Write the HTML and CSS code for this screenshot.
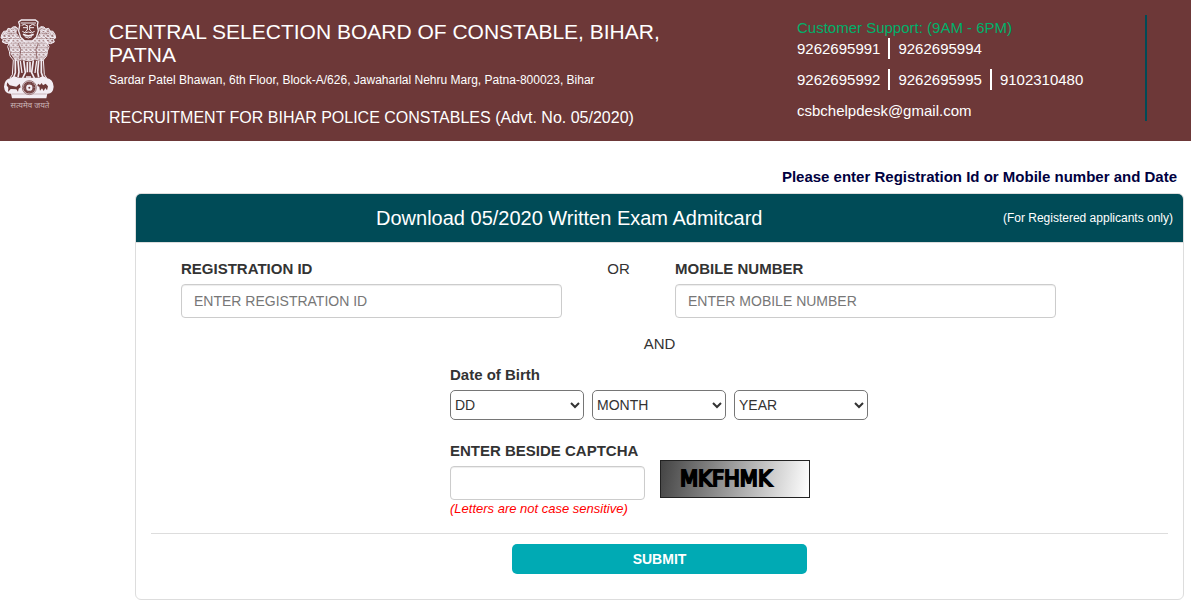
FILE: index.html
```
<!DOCTYPE html>
<html lang="en">
  <head>
    <meta charset="UTF-8" />
    <meta name="viewport" content="width=device-width, initial-scale=1.0" />
    <title>Download Admitcard</title>
    <link rel="stylesheet" href="styles.css">
  </head>
  <body>
    <header class="header">
      <div class="emblem">
        <svg viewBox="0 27 171 243" width="57" height="81" aria-hidden="true">
          <defs>
            <pattern id="mane" width="13" height="14" patternUnits="userSpaceOnUse">
              <path d="M1 2q6 9 12 0M-5 9q6 9 12 0M8 9q6 9 12 0" fill="none" stroke="#f3edf3" stroke-width="4" />
              <path d="M7 0v5M0 8v5M13 8v5" stroke="#f3edf3" stroke-width="2" />
            </pattern>
          </defs>
          <!-- side lions -->
          <g fill="none" stroke="#f3edf3" stroke-width="3">
            <path d="M55 57l-8-7-9 1-5 6-9-2-4 8-9 1-6 10-2 10 7 4-3 8 11 5 14-3 4-8" fill="url(#mane)" />
            <path d="M10 72l8-3 7 5M5 83l13-1 7 4M28 57l9 6 9-5" />
            <path d="M28 98l-5 12 5 14 2 14 10 12-3 44-7 10" />
            <path d="M46 150v38l-5 14M54 152l3 34-3 16" stroke-width="5" />
          </g>
          <g fill="none" stroke="#f3edf3" stroke-width="3">
            <path d="M115 57l8-7 9 1 5 6 9-2 4 8 9 1 6 10 2 10-7 4 3 8-11 5-14-3-4-8" fill="url(#mane)" />
            <path d="M160 72l-8-3-7 5M165 83l-13-1-7 4M142 57l-9 6-9-5" />
            <path d="M142 98l5 12-5 14-2 14-10 12 3 44 7 10" />
            <path d="M124 150v38l5 14M116 152l-3 34 3 16" stroke-width="5" />
          </g>
          <!-- manes -->
          <path d="M26 96l22-30 14 20 23 9 23-9 14-20 22 30-2 35-14 22-25-3-16 5-16-5-25 3-14-22z" fill="#f3edf3" fill-opacity="0.3" />
          <path d="M26 96l22-30 14 20 23 9 23-9 14-20 22 30-2 35-14 22-25-3-16 5-16-5-25 3-14-22z" fill="url(#mane)" />
          <path d="M55 100l7 18-3 30M115 100l-7 18 3 30" fill="none" stroke="#6d3838" stroke-width="2" />
          <!-- front lion -->
          <path d="M56 36l8-6h42l8 6-2 10 3 17-6 19-12 11H74L62 82l-6-19 3-17z" fill="#6d3838" stroke="#f3edf3" stroke-width="4" />
          <g fill="none" stroke="#f3edf3" stroke-width="3">
            <path d="M62 39h46M65 46q9-7 17 2M106 46q-9-7-17 2M69 53h12M90 53h12M82 46v14l-6 5M89 46v14l6 5" />
            <path d="M67 64q8 8 18 2 10 6 19-2M74 80q11 8 22 0" />
            <path d="M69 73q16 9 32 0" stroke-width="5" />
            <path d="M71 151l5 37-8 16M100 151l-5 37 8 16M82 156v31M90 156v31" stroke-width="5" />
            <path d="M61 153l5 36M110 153l-5 36M78 201h15" stroke-width="4" />
          </g>
          <!-- abacus and base -->
          <path d="M32 204q10-8 22-1h64q12-7 22 1 20 4 21 26-2 22-19 21l-3 14H36l-3-14q-19 1-21-21 1-22 20-26z" fill="#f3edf3" />
          <path d="M22 217l7 9 20 4 10-9 3 11-6 4-2 9-5-7-17-1-8 9 1-13-5-7zM114 221l6 4 5-6 4 7 8-5 7 8-3 12-5-7-5 9-5-8-6 7-2-12-6-2z" fill="#6d3838" />
          <circle cx="88" cy="233" r="21" fill="#f3edf3" stroke="#6d3838" stroke-width="2" />
          <circle cx="88" cy="233" r="14" fill="none" stroke="#6d3838" stroke-width="9" />
          <circle cx="88" cy="233" r="14" fill="none" stroke="#a98c90" stroke-width="5" stroke-dasharray="1 3" />
          <circle cx="88" cy="233" r="3" fill="#6d3838" />
          <path d="M35 252h105" stroke="#b79ca2" stroke-width="2" />
        </svg>
        <div class="motto" lang="hi">सत्यमेव जयते</div>
      </div>
      <div class="board">
        <h1 class="board-name">CENTRAL SELECTION BOARD OF CONSTABLE, BIHAR, PATNA</h1>
        <p class="address">Sardar Patel Bhawan, 6th Floor, Block-A/626, Jawaharlal Nehru Marg, Patna-800023, Bihar</p>
        <h2 class="advert">RECRUITMENT FOR BIHAR POLICE CONSTABLES (Advt. No. 05/2020)</h2>
      </div>
      <div class="support">
        <div class="support-title">Customer Support: (9AM - 6PM)</div>
        <div class="phones"><span>9262695991</span><span>9262695994</span></div>
        <div class="phones"><span>9262695992</span><span>9262695995</span><span>9102310480</span></div>
        <div class="email">csbchelpdesk@gmail.com</div>
      </div>
    </header>

    <main class="content">
      <div class="notice">Please enter Registration Id or Mobile number and Date</div>

      <form class="panel">
        <div class="panel-heading">
          <h3 class="panel-title">Download 05/2020 Written Exam Admitcard</h3>
          <span class="panel-note">(For Registered applicants only)</span>
        </div>
        <div class="panel-body">
          <div class="ids">
            <div>
              <label class="label" for="regid">REGISTRATION ID</label>
              <input class="form-control" type="text" id="regid" placeholder="ENTER REGISTRATION ID" />
            </div>
            <div class="or">OR</div>
            <div>
              <label class="label" for="mobile">MOBILE NUMBER</label>
              <input class="form-control" type="text" id="mobile" placeholder="ENTER MOBILE NUMBER" />
            </div>
          </div>
          <div class="and">AND</div>

          <div class="details">
            <label class="label" for="day">Date of Birth</label>
            <div class="dob">
              <select class="dob-select" id="day"><option>DD</option></select>
              <select class="dob-select" id="month" aria-label="Month"><option>MONTH</option></select>
              <select class="dob-select" id="year" aria-label="Year"><option>YEAR</option></select>
            </div>
            <div class="captcha">
              <div class="captcha-field">
                <label class="label" for="captcha">ENTER BESIDE CAPTCHA</label>
                <input class="form-control" type="text" id="captcha" />
                <div class="hint">(Letters are not case sensitive)</div>
              </div>
              <svg class="captcha-image" width="150" height="38">
                <text x="19" y="25">MKFHMK</text>
              </svg>
            </div>
          </div>

          <hr class="line" />
          <button class="submit" type="button">SUBMIT</button>
        </div>
      </form>
    </main>
  </body>
</html>
```
FILE: styles.css
```
* {
  box-sizing: border-box;
}

body {
  margin: 0;
  font-family: "Liberation Sans", Arial, sans-serif;
  font-size: 14px;
  color: #333;
  background-color: #fff;
}

h1,
h2,
h3,
p {
  margin: 0;
  font-weight: normal;
}

.header {
  display: flex;
  align-items: flex-start;
  padding: 15px 44px 13px 0;
  background-color: #6d3838;
  color: #fff;
}

.emblem {
  width: 109px;
  padding-top: 4px;
}

.emblem svg {
  display: block;
}

.motto {
  width: 60px;
  font-family: "Noto Sans Devanagari", "Noto Sans", sans-serif;
  font-size: 8px;
  line-height: 12px;
  text-align: center;
  white-space: nowrap;
  color: #c9b4b6;
}

.board {
  flex: 1;
  padding: 5px 96px 0 0;
}

.board-name {
  font-size: 21px;
  line-height: 23px;
}

.address {
  margin-top: 6px;
  font-size: 12px;
  line-height: 16px;
}

.advert {
  margin-top: 20px;
  font-size: 16px;
  line-height: 20px;
}

.support {
  width: 350px;
  height: 106px;
  border-right: 2px solid #004b57;
  font-size: 15px;
  line-height: 21px;
}

.support-title {
  padding-top: 2px;
  color: #00b16a;
}

.phones {
  display: flex;
  margin-bottom: 10px;
}

.phones span + span {
  margin-left: 8px;
  padding-left: 8px;
  border-left: 2px solid #fff;
}

.content {
  padding: 25px 7px 2px 135px;
}

.notice {
  padding-right: 7px;
  font-size: 15px;
  line-height: 22px;
  font-weight: bold;
  text-align: right;
  color: #000040;
}

.panel {
  margin-top: 5px;
  border: 1px solid #ddd;
  border-radius: 6px;
  overflow: hidden;
}

.panel-heading {
  display: grid;
  grid-template-columns: 1fr auto;
  align-items: center;
  height: 49px;
  padding: 0 10px 0 240px;
  border-bottom: 1px solid #ddd;
  background-color: #004b57;
  color: #fff;
}

.panel-title {
  font-size: 20px;
}

.panel-note {
  font-size: 12px;
}

.panel-body {
  padding: 15px 15px 25px;
}

.label {
  display: block;
  margin-bottom: 5px;
  font-size: 15px;
  line-height: 21px;
  font-weight: bold;
}

.ids {
  display: grid;
  grid-template-columns: 1fr 113px 1fr;
  padding: 0 112px 0 30px;
}

.form-control {
  display: block;
  width: 100%;
  height: 34px;
  padding: 6px 12px;
  border: 1px solid #ccc;
  border-radius: 4px;
  box-shadow: inset 0 1px 1px rgba(0, 0, 0, 0.075);
  font-family: inherit;
  font-size: 14px;
  color: #555;
  background-color: #fff;
}

.form-control::placeholder {
  color: #777;
}

.or,
.and {
  font-size: 15px;
  line-height: 21px;
  text-align: center;
}

.and {
  margin: 15px 0 10px;
}

.details {
  margin-left: 299px;
}

.dob {
  display: flex;
  gap: 8px;
}

.dob-select {
  width: 134px;
  height: 30px;
  border: 1px solid #767676;
  border-radius: 5px;
  font-family: inherit;
  font-size: 14px;
  color: #333;
  background-color: #fff;
}

.captcha {
  display: flex;
  align-items: center;
  gap: 15px;
  margin-top: 20px;
}

.captcha-field {
  width: 195px;
}

.hint {
  font-size: 13px;
  line-height: 18px;
  font-style: italic;
  color: #f00;
}

.captcha-image {
  border: 1px solid #222;
  background: linear-gradient(100deg, #444, #fff);
}

.captcha-image text {
  font-family: "DejaVu Sans", sans-serif;
  font-size: 21px;
  fill: #000;
  stroke: #000;
  stroke-width: 2px;
}

.line {
  margin: 15px 0 10px;
  border: 0;
  border-top: 1px solid #ddd;
}

.submit {
  display: block;
  width: 29%;
  height: 30px;
  margin: 0 auto;
  border: 0;
  border-radius: 5px;
  font-family: inherit;
  font-size: 14px;
  font-weight: bold;
  color: #fff;
  background-color: #00aab4;
}
```
